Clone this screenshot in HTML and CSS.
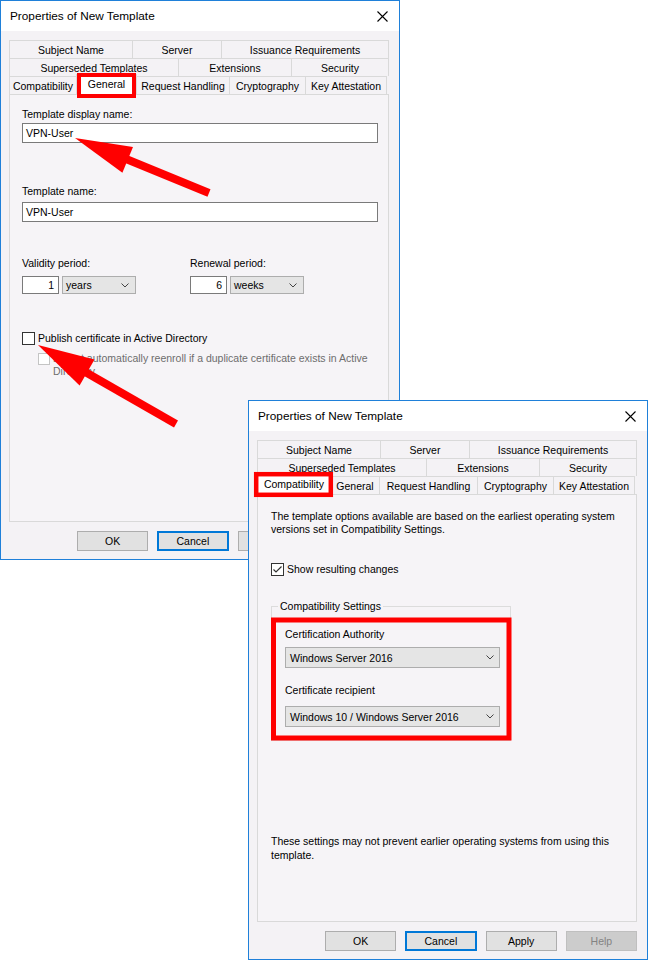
FILE: index.html
```html
<!DOCTYPE html>
<html lang="en">

<head>
  <meta charset="UTF-8" />
  <title>Properties of New Template</title>
  <meta name="viewport" content="width=device-width, initial-scale=1.0" />
  <link rel="stylesheet" href="styles.css">
</head>

<body>
  <div class="desktop">

    <!-- first window: General tab -->
    <div class="dialog dialog-general">
      <div class="titlebar">
        <span>Properties of New Template</span>
        <svg class="close" width="11" height="11" viewBox="0 0 11 11">
          <path d="M0.5 0.5 L10.5 10.5 M10.5 0.5 L0.5 10.5" stroke="#000" stroke-width="1.1" fill="none" />
        </svg>
      </div>
      <div class="dialog-body">
        <div class="tabs">
          <div class="tab-row row-a">
            <div class="tab">Subject Name</div>
            <div class="tab">Server</div>
            <div class="tab">Issuance Requirements</div>
          </div>
          <div class="tab-row row-b">
            <div class="tab">Superseded Templates</div>
            <div class="tab">Extensions</div>
            <div class="tab">Security</div>
          </div>
          <div class="tab-row row-c">
            <div class="tab">Compatibility</div>
            <div class="tab active">General</div>
            <div class="tab">Request Handling</div>
            <div class="tab">Cryptography</div>
            <div class="tab">Key Attestation</div>
          </div>
        </div>

        <div class="panel">
          <div class="page page-general">
            <div class="field-label">Template display name:</div>
            <div class="textbox first-box">VPN-User</div>

            <div class="field-label name-label">Template name:</div>
            <div class="textbox second-box">VPN-User</div>

            <div class="periods">
              <div class="period">
                <div class="field-label">Validity period:</div>
                <div class="period-controls">
                  <div class="num">1</div>
                  <div class="combo">
                    <span>years</span>
                    <svg width="8" height="5" viewBox="0 0 8 5"><path d="M0.5 0.5 L4 4 L7.5 0.5" stroke="#444" fill="none" /></svg>
                  </div>
                </div>
              </div>
              <div class="period">
                <div class="field-label">Renewal period:</div>
                <div class="period-controls">
                  <div class="num">6</div>
                  <div class="combo">
                    <span>weeks</span>
                    <svg width="8" height="5" viewBox="0 0 8 5"><path d="M0.5 0.5 L4 4 L7.5 0.5" stroke="#444" fill="none" /></svg>
                  </div>
                </div>
              </div>
            </div>

            <div class="option publish">
              <span class="check"></span>
              <span class="option-text">Publish certificate in Active Directory</span>
            </div>
            <div class="option sub-option">
              <span class="check disabled"></span>
              <span class="option-text">Do not automatically reenroll if a duplicate certificate exists in Active<br>Directory</span>
            </div>
          </div>
        </div>

        <div class="buttons">
          <div class="btn">OK</div>
          <div class="btn default">Cancel</div>
          <div class="btn">Apply</div>
          <div class="btn disabled">Help</div>
        </div>
      </div>
    </div>

    <!-- second window: Compatibility tab -->
    <div class="dialog dialog-compat">
      <div class="titlebar">
        <span>Properties of New Template</span>
        <svg class="close" width="11" height="11" viewBox="0 0 11 11">
          <path d="M0.5 0.5 L10.5 10.5 M10.5 0.5 L0.5 10.5" stroke="#000" stroke-width="1.1" fill="none" />
        </svg>
      </div>
      <div class="dialog-body">
        <div class="tabs">
          <div class="tab-row row-a">
            <div class="tab">Subject Name</div>
            <div class="tab">Server</div>
            <div class="tab">Issuance Requirements</div>
          </div>
          <div class="tab-row row-b">
            <div class="tab">Superseded Templates</div>
            <div class="tab">Extensions</div>
            <div class="tab">Security</div>
          </div>
          <div class="tab-row row-c">
            <div class="tab active">Compatibility</div>
            <div class="tab">General</div>
            <div class="tab">Request Handling</div>
            <div class="tab">Cryptography</div>
            <div class="tab">Key Attestation</div>
          </div>
        </div>

        <div class="panel">
          <div class="page page-compat">
            <p class="note">The template options available are based on the earliest operating system<br>versions set in Compatibility Settings.</p>

            <div class="option show-changes">
              <span class="check">
                <svg width="11" height="11" viewBox="0 0 11 11"><path d="M1.5 5.5 L4 8 L9.5 2.5" stroke="#333" stroke-width="1.2" fill="none" /></svg>
              </span>
              <span class="option-text">Show resulting changes</span>
            </div>

            <fieldset class="group">
              <legend>Compatibility Settings</legend>
              <div class="group-body">
                <div class="field-label">Certification Authority</div>
                <div class="combo wide">
                  <span>Windows Server 2016</span>
                  <svg width="8" height="5" viewBox="0 0 8 5"><path d="M0.5 0.5 L4 4 L7.5 0.5" stroke="#444" fill="none" /></svg>
                </div>
                <div class="field-label recipient-label">Certificate recipient</div>
                <div class="combo wide recipient-combo">
                  <span>Windows 10 / Windows Server 2016</span>
                  <svg width="8" height="5" viewBox="0 0 8 5"><path d="M0.5 0.5 L4 4 L7.5 0.5" stroke="#444" fill="none" /></svg>
                </div>
              </div>
            </fieldset>

            <p class="note bottom-note">These settings may not prevent earlier operating systems from using this<br>template.</p>
          </div>
        </div>

        <div class="buttons">
          <div class="btn">OK</div>
          <div class="btn default">Cancel</div>
          <div class="btn">Apply</div>
          <div class="btn disabled">Help</div>
        </div>
      </div>
    </div>

    <!-- red markup drawn over the screenshots -->
    <svg class="annotations" width="648" height="960" viewBox="0 0 648 960">
      <g fill="none" stroke="#ff0000">
        <rect x="79" y="75" width="55" height="21" stroke-width="4" />
        <rect x="256.2" y="474.2" width="74.6" height="20.6" stroke-width="4.5" />
        <rect x="273.5" y="620" width="235.5" height="118" stroke-width="5" />
        <line x1="209" y1="193" x2="120" y2="156.5" stroke-width="8" />
        <line x1="176" y1="424" x2="80" y2="369" stroke-width="8" />
      </g>
      <g fill="#ff0000">
        <polygon points="75,138 133,146.9 122.4,172.7" />
        <polygon points="38,345 94.5,359.5 79.6,385.5" />
      </g>
    </svg>
  </div>
</body>

</html>
```

FILE: styles.css
```css
* {
  box-sizing: border-box;
}

body {
  margin: 0;
  background: #fff;
  font-family: "Liberation Sans", Arial, sans-serif;
  font-size: 10.5px;
  color: #000;
}

.desktop {
  position: relative;
  width: 648px;
  height: 960px;
  overflow: hidden;
}

/* windows */
.dialog {
  position: absolute;
  width: 400px;
  height: 560px;
  border: 1px solid #1f80d9;
  background: #f4f2f5;
  display: flex;
  flex-direction: column;
}

.dialog-general {
  left: 0;
  top: 0;
}

.dialog-compat {
  left: 248px;
  top: 400px;
}

.titlebar {
  height: 30px;
  flex: none;
  background: #fff;
  display: flex;
  align-items: center;
  justify-content: space-between;
  padding: 0 11px 0 9px;
  font-size: 11.8px;
}

.close {
  display: block;
}

.dialog-body {
  flex: 1;
  padding: 9px 10px 0 8px;
}

/* tab strip */
.tab-row {
  display: grid;
  height: 18px;
}

.row-a {
  grid-template-columns: 124px 89px 167px;
}

.row-b {
  grid-template-columns: 170px 113px 97px;
}

.dialog-general .row-c {
  grid-template-columns: 68px 60px 93px 76px 81px;
}

.dialog-compat .row-c {
  grid-template-columns: 74px 49px 98px 76px 81px;
}

.tab {
  border: 1px solid #d9d9d9;
  border-bottom: 0;
  margin-left: -1px;
  display: flex;
  align-items: center;
  justify-content: center;
  white-space: nowrap;
}

.tab:first-child {
  margin-left: 0;
}

.tab.active {
  position: relative;
  z-index: 1;
  align-self: start;
  height: 21px;
  margin-top: -2px;
  background: #fff;
  padding-bottom: 2px;
}

.panel {
  height: 428px;
  border: 1px solid #d9d9d9;
  background: #f6f4f7;
}

/* page content */
.page {
  display: flex;
  flex-direction: column;
  align-items: flex-start;
}

.page-general {
  padding: 13px 10px 0 12px;
}

.page-compat {
  padding: 15px 10px 0 13px;
}

.field-label {
  line-height: 13px;
}

.textbox {
  width: 356px;
  height: 20px;
  border: 1px solid #7a7a7a;
  background: #fff;
  padding-left: 3px;
  display: flex;
  align-items: center;
}

.first-box {
  margin-top: 2px;
}

.name-label {
  margin-top: 42px;
}

.second-box {
  margin-top: 4px;
}

.periods {
  display: flex;
  margin-top: 35px;
}

.period {
  width: 168px;
}

.period-controls {
  display: flex;
  gap: 3px;
  margin-top: 6px;
}

.num {
  width: 37px;
  height: 18px;
  border: 1px solid #7a7a7a;
  background: #fff;
  text-align: right;
  padding-right: 4px;
  line-height: 16px;
}

.combo {
  width: 74px;
  height: 18px;
  border: 1px solid #adadad;
  background: #e5e5e5;
  display: flex;
  align-items: center;
  justify-content: space-between;
  padding: 0 6px 0 3px;
}

.combo svg {
  display: block;
  flex: none;
}

.combo.wide {
  width: 215px;
  height: 21px;
  margin-top: 6px;
  padding: 0 5px 0 4px;
}

.recipient-label {
  margin-top: 16px;
}

.combo.recipient-combo {
  margin-top: 9px;
}

.option {
  display: flex;
  align-items: flex-start;
  line-height: 13px;
}

.option-text {
  margin-left: 3px;
}

.check {
  width: 13px;
  height: 13px;
  flex: none;
  border: 1px solid #333;
  background: #fff;
}

.check svg {
  display: block;
}

.check.disabled {
  width: 12px;
  height: 12px;
  margin-top: 1px;
  border-color: #c4c4c4;
}

.publish {
  margin-top: 38px;
}

.sub-option {
  margin-top: 7px;
  margin-left: 16px;
  color: #6d6d6d;
}

.note {
  margin: 0;
  line-height: 13px;
}

.show-changes {
  margin-top: 27px;
}

.group {
  width: 240px;
  margin: 24px 0 0;
  padding: 0 0 13px 6px;
  border: 1px solid #dcdcdc;
}

.group legend {
  padding: 0 2px;
  line-height: 13px;
}

.group-body {
  padding: 15px 0 0 7px;
}

.bottom-note {
  margin-top: 94px;
  line-height: 13.5px;
}

/* buttons */
.buttons {
  display: flex;
  gap: 9px;
  padding-left: 68px;
  margin-top: 9px;
}

.btn {
  width: 72px;
  height: 20px;
  border: 1px solid #adadad;
  background: #e1e1e1;
  display: flex;
  align-items: center;
  justify-content: center;
}

.btn.default {
  border: 2px solid #0078d7;
}

.btn.disabled {
  background: #cccccc;
  border-color: #bfbfbf;
  color: #838383;
}

/* red markup */
.annotations {
  position: absolute;
  left: 0;
  top: 0;
  z-index: 5;
  pointer-events: none;
}
```
